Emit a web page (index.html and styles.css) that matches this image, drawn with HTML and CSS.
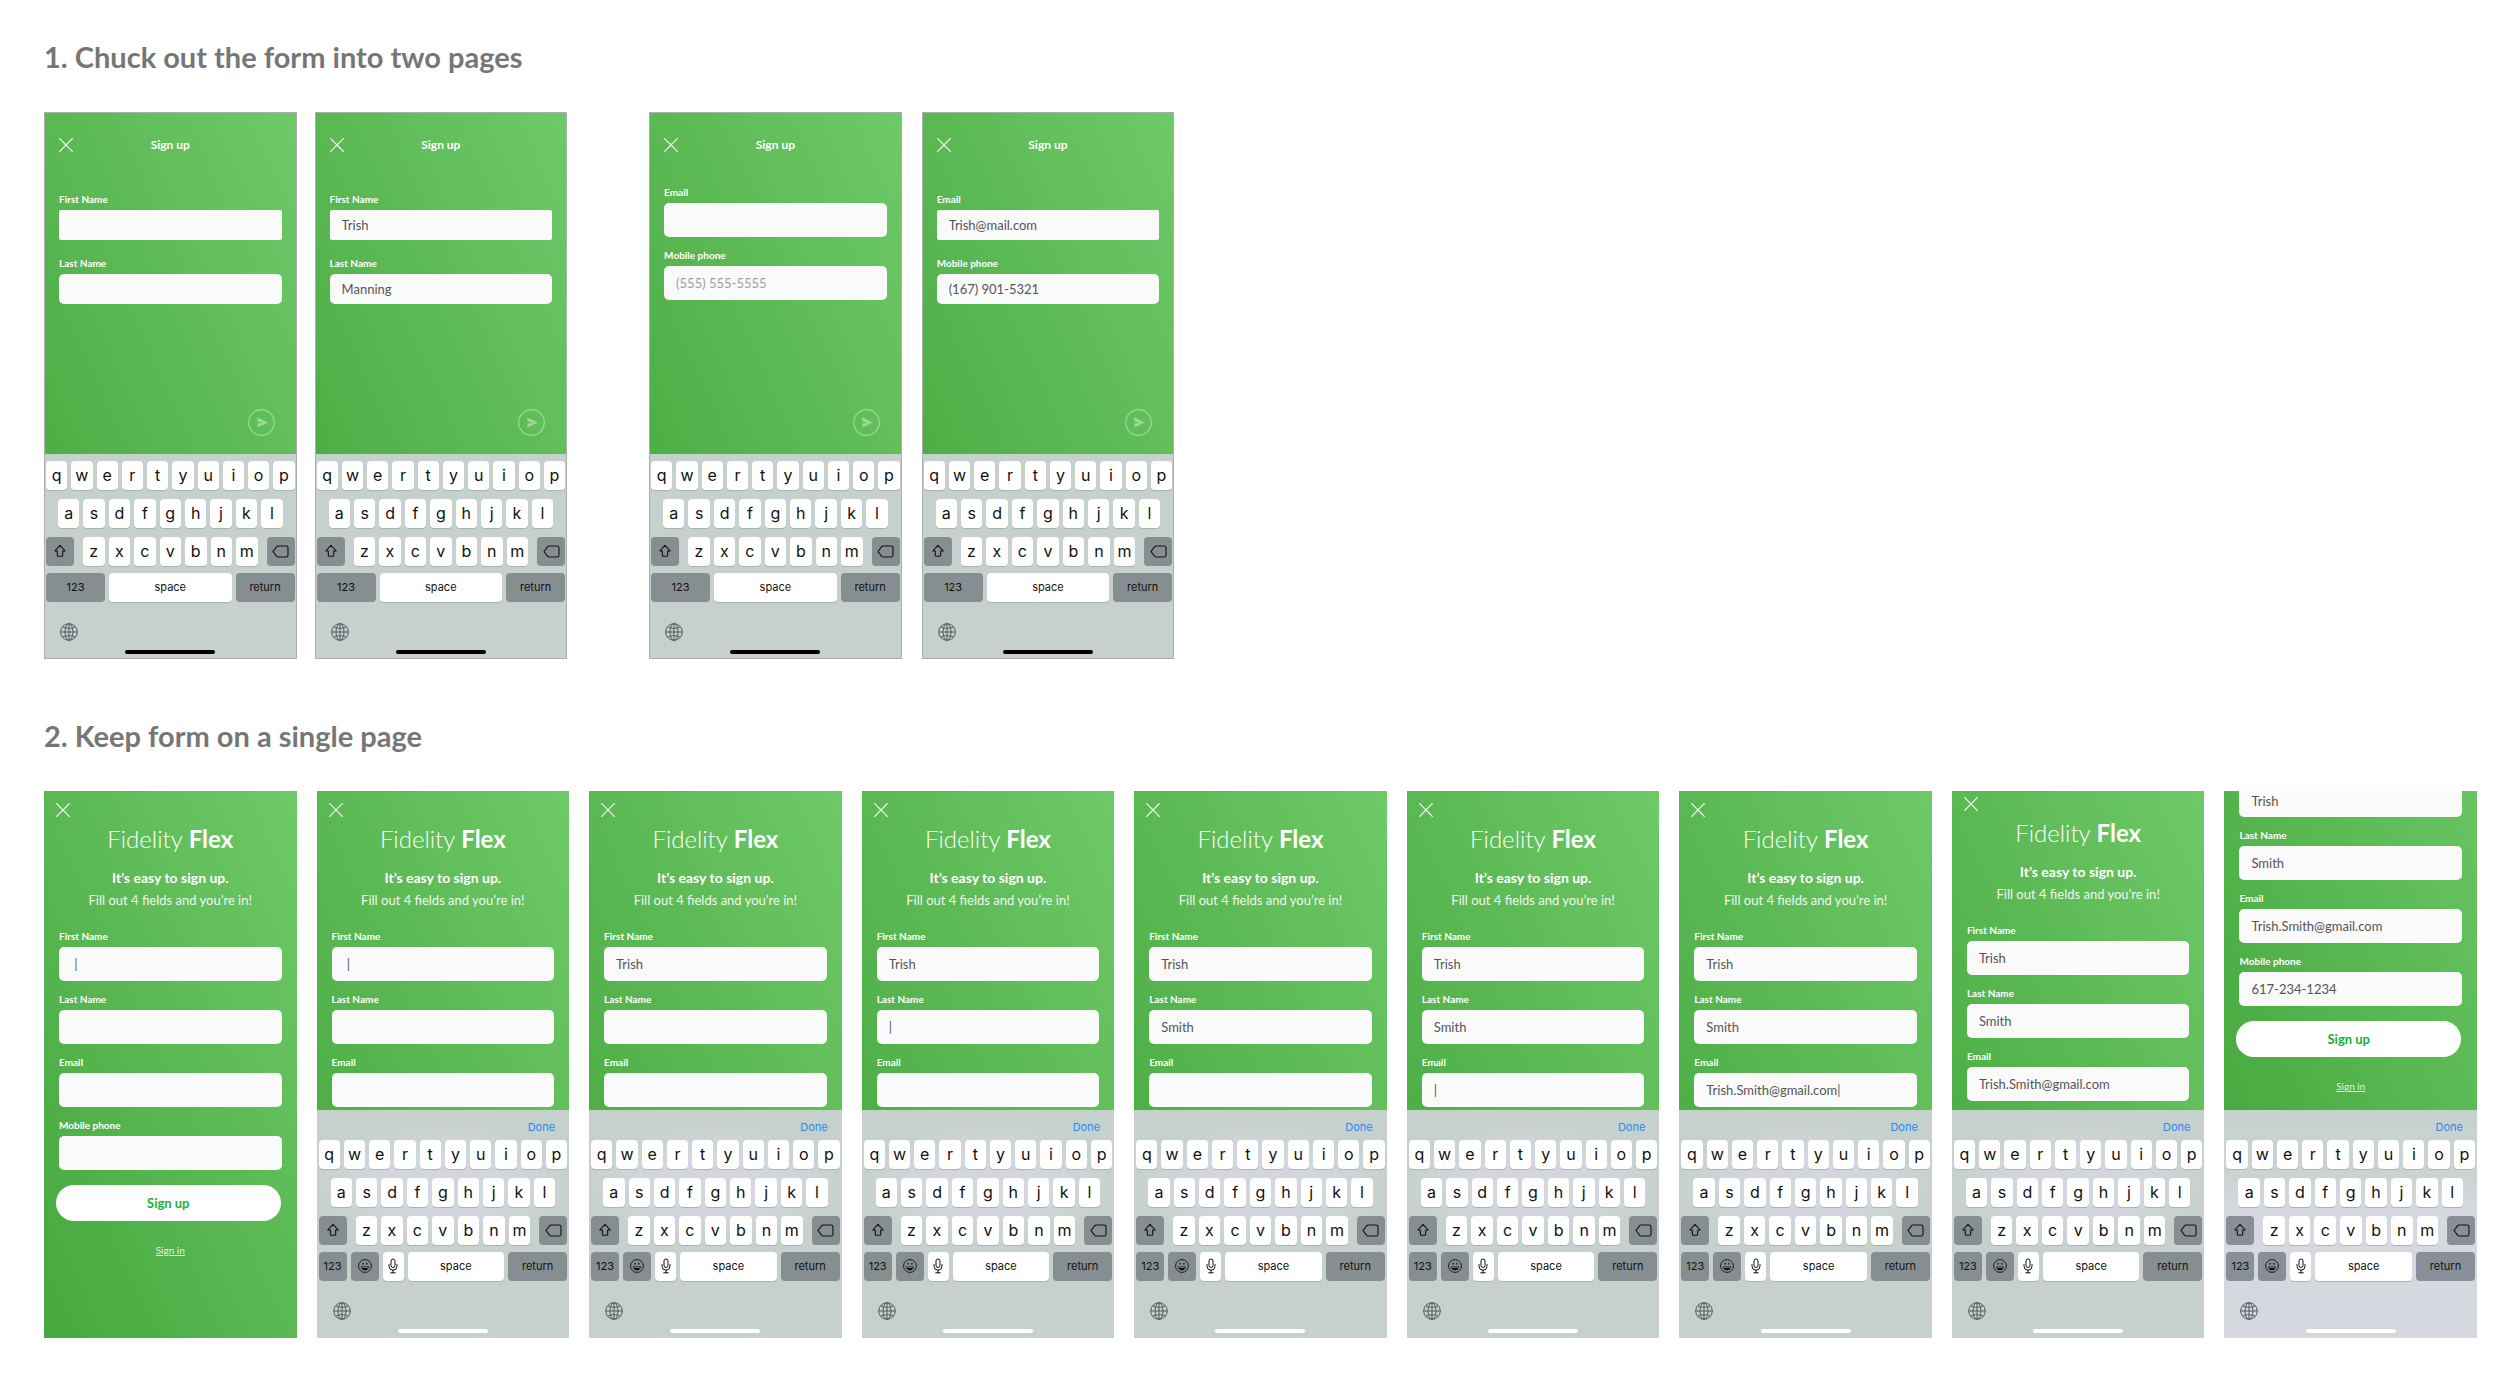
FILE: index.html
```html
<!DOCTYPE html>
<html lang="en">
<head>
<meta charset="utf-8">
<meta name="viewport" content="width=device-width, initial-scale=1">
<title>Sign up flows</title>
<link rel="stylesheet" href="styles.css">
</head>
<body>

<svg class="sprite" aria-hidden="true">
  <symbol id="i-close" viewBox="0 0 14 14"><path d="M.7.7l12.6 12.6M13.3.7L.7 13.3" fill="none" stroke="currentColor" stroke-width="1.2" stroke-linecap="round"/></symbol>
  <symbol id="i-send" viewBox="0 0 27 27"><circle cx="13.5" cy="13.5" r="12.8" fill="none" stroke="currentColor" stroke-width="1.2"/><path d="M9.4 8.6l10.6 4.9-10.6 4.9v-3.8l6-1.1-6-1.1z" fill="currentColor"/></symbol>
  <symbol id="i-shift" viewBox="0 0 14 14"><path d="M7 1.3L12.2 7H9.7v4.2a1 1 0 0 1-1 1H5.300a1 1 0 0 1-1-1V7H1.800z" fill="none" stroke="currentColor" stroke-width="1.1" stroke-linejoin="round"/></symbol>
  <symbol id="i-delete" viewBox="0 0 17 13"><path d="M6 1h8.200a1.800 1.800 0 0 1 1.800 1.800v7.400a1.800 1.800 0 0 1-1.800 1.800H6a1.800 1.800 0 0 1-1.300-.6L1 6.500l3.700-4.900A1.800 1.800 0 0 1 6 1z" fill="none" stroke="currentColor" stroke-width="1.1" stroke-linejoin="round"/></symbol>
  <symbol id="i-emoji" viewBox="0 0 14 14"><circle cx="7" cy="7" r="6.400" fill="none" stroke="currentColor" stroke-width=".9"/><ellipse cx="5.100" cy="4.800" rx=".7" ry="1" fill="currentColor"/><ellipse cx="8.900" cy="4.800" rx=".7" ry="1" fill="currentColor"/><path d="M3 7.600h8c0 2.300-1.800 3.800-4 3.800s-4-1.500-4-3.800z" fill="currentColor"/><path d="M3.900 8.100h6.200v.8H3.900z" fill="#868e92"/></symbol>
  <symbol id="i-mic" viewBox="0 0 10 16"><rect x="3" y="1" width="4" height="8.500" rx="2" fill="none" stroke="currentColor"/><path d="M1 6.500v1.700a4 4 0 0 0 8 0V6.500M5 12.200v2.600M2.700 14.800h4.600" fill="none" stroke="currentColor" stroke-linecap="round"/></symbol>
  <symbol id="i-globe" viewBox="0 0 18 18"><g fill="none" stroke="currentColor" stroke-width="1"><circle cx="9" cy="9" r="8.300"/><ellipse cx="9" cy="9" rx="4" ry="8.300"/><path d="M9 .7v16.600M.7 9h16.600M2.800 3.800c3.500 2 8.900 2 12.400 0M2.800 14.200c3.500-2 8.900-2 12.400 0"/></g></symbol>
</svg>

<template id="letters">
  <div class="keys">
    <button class="key">q</button><button class="key">w</button><button class="key">e</button><button class="key">r</button><button class="key">t</button><button class="key">y</button><button class="key">u</button><button class="key">i</button><button class="key">o</button><button class="key">p</button>
  </div>
  <div class="keys keys-home">
    <button class="key">a</button><button class="key">s</button><button class="key">d</button><button class="key">f</button><button class="key">g</button><button class="key">h</button><button class="key">j</button><button class="key">k</button><button class="key">l</button>
  </div>
  <div class="keys">
    <button class="key key-dark key-shift" aria-label="Shift"><svg class="icon-shift"><use href="#i-shift"/></svg></button>
    <button class="key">z</button><button class="key">x</button><button class="key">c</button><button class="key">v</button><button class="key">b</button><button class="key">n</button><button class="key">m</button>
    <button class="key key-dark key-delete" aria-label="Delete"><svg class="icon-delete"><use href="#i-delete"/></svg></button>
  </div>
</template>

<template id="simple-controls">
  <div class="keys keys-last">
    <button class="key key-dark key-word key-return">123</button>
    <button class="key key-word">space</button>
    <button class="key key-dark key-word key-return">return</button>
  </div>
</template>

<template id="full-controls">
  <div class="keys keys-last">
    <button class="key key-dark key-word key-narrow">123</button>
    <button class="key key-dark key-narrow" aria-label="Emoji"><svg class="icon-emoji"><use href="#i-emoji"/></svg></button>
    <button class="key key-mic" aria-label="Dictate"><svg class="icon-mic"><use href="#i-mic"/></svg></button>
    <button class="key key-word">space</button>
    <button class="key key-dark key-word key-return">return</button>
  </div>
</template>

<template id="keyboard-foot">
  <button class="globe" aria-label="Next keyboard"><svg class="icon-globe"><use href="#i-globe"/></svg></button>
  <div class="home-bar"></div>
</template>

<main class="board">
  <section class="flow">
    <h1>1. Chuck out the form into two pages</h1>
    <div class="pairs">
      <div class="pair">
        <article class="phone phone-framed">
          <form class="screen step">
            <header class="bar"><button type="button" class="close" aria-label="Close"><svg><use href="#i-close"/></svg></button><h2>Sign up</h2></header>
            <div class="fields">
              <label class="field field-square">First Name<input type="text"></label>
              <label class="field">Last Name<input type="text"></label>
            </div>
            <button type="button" class="send" aria-label="Next"><svg><use href="#i-send"/></svg></button>
          </form>
          <div class="keyboard"></div>
        </article>
        <article class="phone phone-framed">
          <form class="screen step">
            <header class="bar"><button type="button" class="close" aria-label="Close"><svg><use href="#i-close"/></svg></button><h2>Sign up</h2></header>
            <div class="fields">
              <label class="field field-square">First Name<input type="text" value="Trish"></label>
              <label class="field">Last Name<input type="text" value="Manning"></label>
            </div>
            <button type="button" class="send" aria-label="Next"><svg><use href="#i-send"/></svg></button>
          </form>
          <div class="keyboard"></div>
        </article>
      </div>
      <div class="pair pair-second">
        <article class="phone phone-framed">
          <form class="screen step step-tall">
            <header class="bar"><button type="button" class="close" aria-label="Close"><svg><use href="#i-close"/></svg></button><h2>Sign up</h2></header>
            <div class="fields">
              <label class="field">Email<input type="text"></label>
              <label class="field">Mobile phone<input type="tel" placeholder="(555) 555-5555"></label>
            </div>
            <button type="button" class="send" aria-label="Next"><svg><use href="#i-send"/></svg></button>
          </form>
          <div class="keyboard"></div>
        </article>
        <article class="phone phone-framed">
          <form class="screen step">
            <header class="bar"><button type="button" class="close" aria-label="Close"><svg><use href="#i-close"/></svg></button><h2>Sign up</h2></header>
            <div class="fields">
              <label class="field field-square">Email<input type="text" value="Trish@mail.com"></label>
              <label class="field">Mobile phone<input type="tel" value="(167) 901-5321"></label>
            </div>
            <button type="button" class="send" aria-label="Next"><svg><use href="#i-send"/></svg></button>
          </form>
          <div class="keyboard"></div>
        </article>
      </div>
    </div>
  </section>

  <section class="flow">
    <h1>2. Keep form on a single page</h1>
    <div class="phones">
      <article class="phone">
        <form class="screen">
          <button type="button" class="close" aria-label="Close"><svg><use href="#i-close"/></svg></button>
          <h2 class="brand">Fidelity <b>Flex</b></h2>
          <p class="lead">It’s easy to sign up.</p>
          <p class="hint">Fill out 4 fields and you’re in!</p>
          <div class="fields">
            <label class="field">First Name<input type="text" value=" |"></label>
            <label class="field">Last Name<input type="text"></label>
            <label class="field">Email<input type="text"></label>
            <label class="field">Mobile phone<input type="tel"></label>
          </div>
          <button type="button" class="submit">Sign up</button>
          <a class="sign-in" href="#">Sign in</a>
        </form>
      </article>
      <article class="phone">
        <form class="screen">
          <button type="button" class="close" aria-label="Close"><svg><use href="#i-close"/></svg></button>
          <h2 class="brand">Fidelity <b>Flex</b></h2>
          <p class="lead">It’s easy to sign up.</p>
          <p class="hint">Fill out 4 fields and you’re in!</p>
          <div class="fields">
            <label class="field">First Name<input type="text" value=" |"></label>
            <label class="field">Last Name<input type="text"></label>
            <label class="field">Email<input type="text"></label>
          </div>
        </form>
        <div class="keyboard keyboard-full"></div>
      </article>
      <article class="phone">
        <form class="screen">
          <button type="button" class="close" aria-label="Close"><svg><use href="#i-close"/></svg></button>
          <h2 class="brand">Fidelity <b>Flex</b></h2>
          <p class="lead">It’s easy to sign up.</p>
          <p class="hint">Fill out 4 fields and you’re in!</p>
          <div class="fields">
            <label class="field">First Name<input type="text" value="Trish"></label>
            <label class="field">Last Name<input type="text"></label>
            <label class="field">Email<input type="text"></label>
          </div>
        </form>
        <div class="keyboard keyboard-full"></div>
      </article>
      <article class="phone">
        <form class="screen">
          <button type="button" class="close" aria-label="Close"><svg><use href="#i-close"/></svg></button>
          <h2 class="brand">Fidelity <b>Flex</b></h2>
          <p class="lead">It’s easy to sign up.</p>
          <p class="hint">Fill out 4 fields and you’re in!</p>
          <div class="fields">
            <label class="field">First Name<input type="text" value="Trish"></label>
            <label class="field">Last Name<input type="text" value="|"></label>
            <label class="field">Email<input type="text"></label>
          </div>
        </form>
        <div class="keyboard keyboard-full"></div>
      </article>
      <article class="phone">
        <form class="screen">
          <button type="button" class="close" aria-label="Close"><svg><use href="#i-close"/></svg></button>
          <h2 class="brand">Fidelity <b>Flex</b></h2>
          <p class="lead">It’s easy to sign up.</p>
          <p class="hint">Fill out 4 fields and you’re in!</p>
          <div class="fields">
            <label class="field">First Name<input type="text" value="Trish"></label>
            <label class="field">Last Name<input type="text" value="Smith"></label>
            <label class="field">Email<input type="text"></label>
          </div>
        </form>
        <div class="keyboard keyboard-full"></div>
      </article>
      <article class="phone">
        <form class="screen">
          <button type="button" class="close" aria-label="Close"><svg><use href="#i-close"/></svg></button>
          <h2 class="brand">Fidelity <b>Flex</b></h2>
          <p class="lead">It’s easy to sign up.</p>
          <p class="hint">Fill out 4 fields and you’re in!</p>
          <div class="fields">
            <label class="field">First Name<input type="text" value="Trish"></label>
            <label class="field">Last Name<input type="text" value="Smith"></label>
            <label class="field">Email<input type="text" value="|"></label>
          </div>
        </form>
        <div class="keyboard keyboard-full"></div>
      </article>
      <article class="phone">
        <form class="screen">
          <button type="button" class="close" aria-label="Close"><svg><use href="#i-close"/></svg></button>
          <h2 class="brand">Fidelity <b>Flex</b></h2>
          <p class="lead">It’s easy to sign up.</p>
          <p class="hint">Fill out 4 fields and you’re in!</p>
          <div class="fields">
            <label class="field">First Name<input type="text" value="Trish"></label>
            <label class="field">Last Name<input type="text" value="Smith"></label>
            <label class="field">Email<input type="text" value="Trish.Smith@gmail.com|"></label>
          </div>
        </form>
        <div class="keyboard keyboard-full"></div>
      </article>
      <article class="phone phone-nudged">
        <form class="screen">
          <button type="button" class="close" aria-label="Close"><svg><use href="#i-close"/></svg></button>
          <h2 class="brand">Fidelity <b>Flex</b></h2>
          <p class="lead">It’s easy to sign up.</p>
          <p class="hint">Fill out 4 fields and you’re in!</p>
          <div class="fields">
            <label class="field">First Name<input type="text" value="Trish"></label>
            <label class="field">Last Name<input type="text" value="Smith"></label>
            <label class="field">Email<input type="text" value="Trish.Smith@gmail.com"></label>
          </div>
        </form>
        <div class="keyboard keyboard-full"></div>
      </article>
      <article class="phone phone-scrolled">
        <form class="screen">
          <div class="fields">
            <label class="field field-cut"><input type="text" value="Trish" aria-label="First Name"></label>
            <label class="field">Last Name<input type="text" value="Smith"></label>
            <label class="field">Email<input type="text" value="Trish.Smith@gmail.com"></label>
            <label class="field">Mobile phone<input type="tel" value="617-234-1234"></label>
          </div>
          <button type="button" class="submit">Sign up</button>
          <a class="sign-in" href="#">Sign in</a>
        </form>
        <div class="keyboard keyboard-full keyboard-lilac"></div>
      </article>
    </div>
  </section>
</main>
<script src="keyboard.js"></script>
</body>
</html>
```
FILE: styles.css
```css
:root {
  --phone-width: calc((100vw - 227px) / 9);
  --dark-key: #868e92;
}

* { box-sizing: border-box; }

body {
  margin: 0;
  background: #fff;
  color: #fff;
  font-family: Lato, sans-serif;
}

h1, h2, p { margin: 0; }

button {
  border: 0;
  padding: 0;
  background: none;
  color: inherit;
  font-family: inherit;
}

svg { display: block; }

.sprite {
  position: absolute;
  width: 0;
  height: 0;
}

.board {
  display: flex;
  flex-direction: column;
  gap: 61px;
  padding: 41px 23px 40px 44px;
}

h1 {
  margin-bottom: 39px;
  color: #767676;
  font-size: 29px;
  font-weight: 700;
  line-height: 32px;
}

.pairs {
  display: flex;
  gap: 82px;
}

.pair {
  display: grid;
  grid-template-columns: repeat(2, var(--phone-width));
  gap: 18px;
}

.pair-second { gap: 20px; }

.phones {
  display: grid;
  grid-template-columns: repeat(9, minmax(0, 1fr));
  gap: 20px;
}

/* Phone */

.phone {
  display: flex;
  flex-direction: column;
  aspect-ratio: 375 / 812;
  overflow: hidden;
  background: linear-gradient(to top right, #46a83e, #6ec968) no-repeat;
}

.phone-framed { border: 1px solid #a9b0ab; }

.phone-scrolled { background-position: 0 -164px; }

.screen {
  display: flex;
  flex: 1;
  flex-direction: column;
  min-height: 0;
  padding: 12px 15px 0;
  overflow: hidden;
}

.phone-nudged .screen { padding-top: 6px; }

.phone-scrolled .screen { padding-top: 0; }

.close {
  flex: none;
  width: 14px;
  height: 14px;
  margin-left: -3px;
}

.close svg {
  width: 14px;
  height: 14px;
}

.step {
  gap: 41px;
  padding: 25px 14px 18px;
}

.step-tall { gap: 34px; }

.bar {
  display: grid;
  grid-template-columns: 14px 1fr 14px;
  align-items: center;
  height: 14px;
}

.bar .close { margin-left: 0; }

.bar h2 {
  font-size: 12px;
  line-height: 14px;
  text-align: center;
}

.brand {
  margin-top: 8px;
  font-size: 24px;
  font-weight: 300;
  line-height: 28px;
  text-align: center;
}

.brand b { font-weight: 700; }

.lead {
  margin-top: 17px;
  font-size: 14px;
  font-weight: 700;
  line-height: 16px;
  text-align: center;
}

.hint {
  margin: 6px 0 22px;
  font-size: 13px;
  line-height: 16px;
  text-align: center;
  opacity: 0.9;
}

/* Fields */

.fields {
  display: flex;
  flex-direction: column;
  gap: 12px;
}

.step .fields { gap: 17px; }

.step-tall .fields { gap: 12px; }

.field {
  display: flex;
  flex-direction: column;
  gap: 5px;
  font-size: 10px;
  font-weight: 700;
  line-height: 12px;
}

.field input {
  width: 100%;
  height: 34px;
  padding: 0 12px;
  border: 0;
  border-radius: 5px;
  background: #fafafa;
  color: #555;
  font-family: inherit;
  font-size: 13px;
}

.field input::placeholder {
  color: #a0a0a0;
  opacity: 1;
}

.step .field input { height: 30px; }

.step-tall .field input { height: 34px; }

.field-square input { border-radius: 2px; }

.field-cut input {
  height: 26px;
  padding-bottom: 6px;
  border-radius: 0 0 5px 5px;
}

.send {
  align-self: flex-end;
  width: 27px;
  height: 27px;
  margin: auto 7px 0 0;
  color: rgba(255, 255, 255, 0.4);
}

.send svg {
  width: 27px;
  height: 27px;
}

.submit {
  flex: none;
  height: 36px;
  margin: 15px 1px 0 -3px;
  border-radius: 18px;
  background: #fff;
  color: #18b13c;
  font-size: 13px;
  font-weight: 700;
}

.sign-in {
  align-self: center;
  margin-top: 22px;
  color: rgba(255, 255, 255, 0.85);
  font-size: 10px;
  line-height: 14px;
}

/* Keyboard */

.keyboard {
  display: flex;
  flex: none;
  flex-direction: column;
  gap: 9px;
  padding: 7px 2px 5px;
  background: #c6d1cd;
  color: #111;
  font-family: Inter, sans-serif;
}

.phone-framed .keyboard { padding: 7px 1px 4px; }

.keyboard-full {
  padding-top: 0;
  background:
    radial-gradient(closest-side, #d3d6de 50%, rgba(211, 214, 222, 0)) 50% 14px / 100% 120px no-repeat,
    #c6d1cd;
}

.keyboard-lilac {
  --dark-key: #898f98;
  background: linear-gradient(#c6d2cd, #cbd3d3 30%, #d5d8df 42%);
}

.keyboard-full .keys:nth-of-type(1) { margin-top: -5px; }

.done {
  align-self: flex-end;
  height: 26px;
  margin-right: 12px;
  padding-top: 8px;
  color: #2b87ee;
  font-size: 11px;
  line-height: 18px;
}

.keys {
  display: flex;
  gap: 4px;
}

.keys-home { padding: 0 12px; }

.keys-last { margin-top: -2px; }

.key {
  flex: 1;
  display: flex;
  align-items: center;
  justify-content: center;
  min-width: 0;
  height: 29px;
  border-radius: 4px;
  background: #fff;
  box-shadow: 0 1px 0 #a9b3b0;
  color: #111;
  font-size: 16px;
}

.key-dark {
  background: var(--dark-key);
  box-shadow: none;
}

.key-word { font-size: 11px; }

.key-shift {
  flex: 0 0 28px;
  margin-right: 5px;
}

.key-delete {
  flex: 0 0 28px;
  margin-left: 5px;
}

.key-return { flex: 0 0 59px; }

.key-narrow { flex: 0 0 28px; }

.key-mic { flex: 0 0 21px; }

.icon-shift, .icon-emoji {
  width: 14px;
  height: 14px;
}

.icon-delete {
  width: 17px;
  height: 13px;
}

.icon-mic {
  width: 10px;
  height: 16px;
}

.globe {
  align-self: flex-start;
  width: 18px;
  height: 18px;
  margin: 12px 0 0 14px;
  color: #4f5a5e;
}

.icon-globe {
  width: 18px;
  height: 18px;
}

.home-bar {
  align-self: center;
  width: 90px;
  height: 4px;
  border-radius: 2px;
  background: #000;
}

.keyboard-full .home-bar { background: #fff; }
```
FILE: keyboard.js
```js
const part = (id) => document.getElementById(id).content.cloneNode(true);

document.querySelectorAll('.keyboard').forEach((keyboard) => {
  const full = keyboard.classList.contains('keyboard-full');
  if (full) {
    const done = document.createElement('button');
    done.className = 'done';
    done.textContent = 'Done';
    keyboard.append(done);
  }
  keyboard.append(
    part('letters'),
    part(full ? 'full-controls' : 'simple-controls'),
    part('keyboard-foot')
  );
});
```
